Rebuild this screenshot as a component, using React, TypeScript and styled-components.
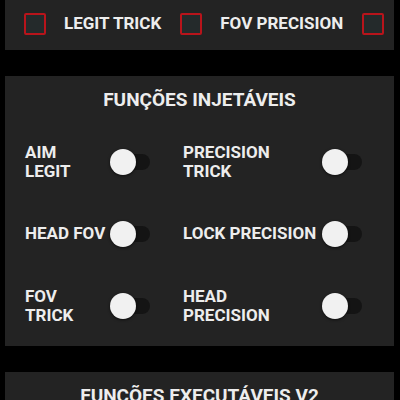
import React from "react";
import styled, { createGlobalStyle } from "styled-components";

const Global = createGlobalStyle`
  html, body { margin: 0; padding: 0; background: #000; }
  body { font-family: Roboto, "Noto Sans", "Liberation Sans", sans-serif; overflow: hidden; }
`;

const Page = styled.div`
  width: 400px;
  height: 400px;
  overflow: hidden;
  display: flex;
  flex-direction: column;
  gap: 26px;
  padding: 0 6px 0 5px;
  box-sizing: border-box;
  background: #000;
`;

const Card = styled.section`
  background: #232323;
  flex-shrink: 0;
`;

const CheckRow = styled.div`
  display: flex;
  align-items: center;
  height: 50px;
  padding: 0 0 2px 19px;
  box-sizing: border-box;
  overflow: hidden;
  white-space: nowrap;
`;

const CheckItem = styled.label`
  display: flex;
  align-items: center;
  gap: 18px;
  margin-right: 19px;
  flex-shrink: 0;
`;

const Box = styled.span`
  width: 22px;
  height: 22px;
  box-sizing: border-box;
  border: 2px solid #b8141b;
  border-radius: 2px;
  background: #242a2b;
  flex-shrink: 0;
`;

const Label = styled.span`
  color: #ededed;
  font-weight: 700;
  font-size: 17px;
  line-height: 19.5px;
  white-space: pre-line;
`;

const Title = styled.h2`
  margin: 0;
  padding: 13px 0 0;
  text-align: center;
  color: #ededed;
  font-weight: 700;
  font-size: 19px;
  line-height: 21px;
`;

const Grid = styled.div`
  display: grid;
  grid-template-columns: 158px 1fr;
  grid-auto-rows: 72px;
  padding: 16px 0 4px 20px;
  align-items: center;
`;

const Cell = styled.div`
  display: flex;
  align-items: center;
`;

const CellLabel = styled(Label)<{ $w: number }>`
  width: ${(p) => p.$w}px;
  flex-shrink: 0;
`;

const Switch = styled.span`
  position: relative;
  width: 42px;
  height: 26px;
  display: block;
  flex-shrink: 0;
`;

const Track = styled.span`
  position: absolute;
  left: 4px;
  top: 5px;
  width: 36px;
  height: 16px;
  border-radius: 8px;
  background: #141414;
`;

const Knob = styled.span`
  position: absolute;
  left: 0;
  top: 0;
  width: 26px;
  height: 26px;
  border-radius: 50%;
  background: #f1f1f1;
  box-shadow: 0 1px 3px rgba(0, 0, 0, 0.6);
`;

const items: { text: string; col: "l" | "r" }[] = [
  { text: "AIM\nLEGIT", col: "l" },
  { text: "PRECISION\nTRICK", col: "r" },
  { text: "HEAD FOV", col: "l" },
  { text: "LOCK PRECISION", col: "r" },
  { text: "FOV\nTRICK", col: "l" },
  { text: "HEAD\nPRECISION", col: "r" },
];

export default function App() {
  return (
    <>
      <Global />
      <Page>
        <Card>
          <CheckRow>
            <CheckItem>
              <Box />
              <Label>LEGIT TRICK</Label>
            </CheckItem>
            <CheckItem>
              <Box />
              <Label>FOV PRECISION</Label>
            </CheckItem>
            <CheckItem>
              <Box />
            </CheckItem>
          </CheckRow>
        </Card>
        <Card>
          <Title>FUNÇÕES INJETÁVEIS</Title>
          <Grid>
            {items.map((it) => (
              <Cell key={it.text}>
                <CellLabel $w={it.col === "l" ? 85 : 139}>{it.text}</CellLabel>
                <Switch>
                  <Track />
                  <Knob />
                </Switch>
              </Cell>
            ))}
          </Grid>
        </Card>
        <Card>
          <Title>FUNÇÕES EXECUTÁVEIS V2</Title>
          <Grid />
        </Card>
      </Page>
    </>
  );
}
